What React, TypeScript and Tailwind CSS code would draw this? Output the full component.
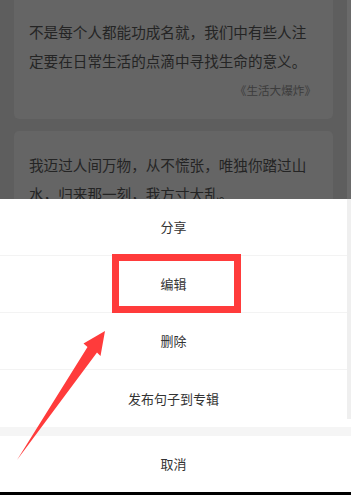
const font = { fontFamily: '"Noto Sans CJK SC", "Noto Sans", sans-serif' };

const actions = ["分享", "编辑", "删除", "发布句子到专辑"];

function QuoteCard({ lines, source, className }: { lines: string[]; source?: string; className: string }) {
  return (
    <div className={`rounded-[5px] bg-[#656565] px-[15px] ${className}`}>
      {lines.map((line) => (
        <p key={line} className="whitespace-nowrap text-[14.6px] leading-[29px] text-[#242424]">
          {line}
        </p>
      ))}
      {source && (
        <p className="mt-[7px] pr-[2px] text-right text-[11.6px] leading-[16px] text-[#3c3c3c]">{source}</p>
      )}
    </div>
  );
}

export default function App() {
  return (
    <div className="relative flex h-[495px] w-[351px] flex-col overflow-hidden bg-white" style={font}>
      {/* dimmed page behind the action sheet */}
      <div className="flex h-[199px] shrink-0 flex-col gap-[12px] overflow-hidden bg-[#5e5e5e] pl-[14px] pr-[18px]">
        <QuoteCard
          className="-mt-[8px] pt-[25px] pb-[21px]"
          lines={["不是每个人都能功成名就，我们中有些人注", "定要在日常生活的点滴中寻找生命的意义。"]}
          source="《生活大爆炸》"
        />
        <QuoteCard
          className="pt-[19px] pb-[20px]"
          lines={["我迈过人间万物，从不慌张，唯独你踏过山", "水，归来那一刻，我方寸大乱。"]}
        />
      </div>

      {/* action sheet */}
      <div className="flex flex-col">
        {actions.map((label, i) => (
          <div
            key={label}
            className={`flex h-[57px] items-center justify-center pr-[4px] text-[13px] text-[#333333] ${
              i < actions.length - 1 ? "border-b border-[#f3f3f3]" : ""
            }`}
          >
            {label}
          </div>
        ))}
        <div className="h-[9px] bg-[#f5f5f5]" />
        <div className="flex h-[56px] items-center justify-center pr-[4px] text-[13px] text-[#333333]">取消</div>
      </div>
      <div className="mt-auto h-[3px] bg-black" />

      {/* scrollbar strip at the right edge */}
      <div className="absolute right-0 top-0 h-[199px] w-[4px] bg-[#6a6a6a]" />
      <div className="absolute right-0 top-[199px] h-[220px] w-[4px] bg-[#efefef]" />

      {/* annotation: red box and arrow */}
      <svg className="pointer-events-none absolute inset-0" width="351" height="495" viewBox="0 0 351 495">
        <rect x="115.5" y="257.5" width="122" height="52" fill="none" stroke="#ff3b3b" strokeWidth="7" />
        <polygon
          points="105,331 83.5,343.5 87.5,347 17,460 97,352.5 100.5,356"
          fill="#ff3b3b"
        />
      </svg>
    </div>
  );
}
